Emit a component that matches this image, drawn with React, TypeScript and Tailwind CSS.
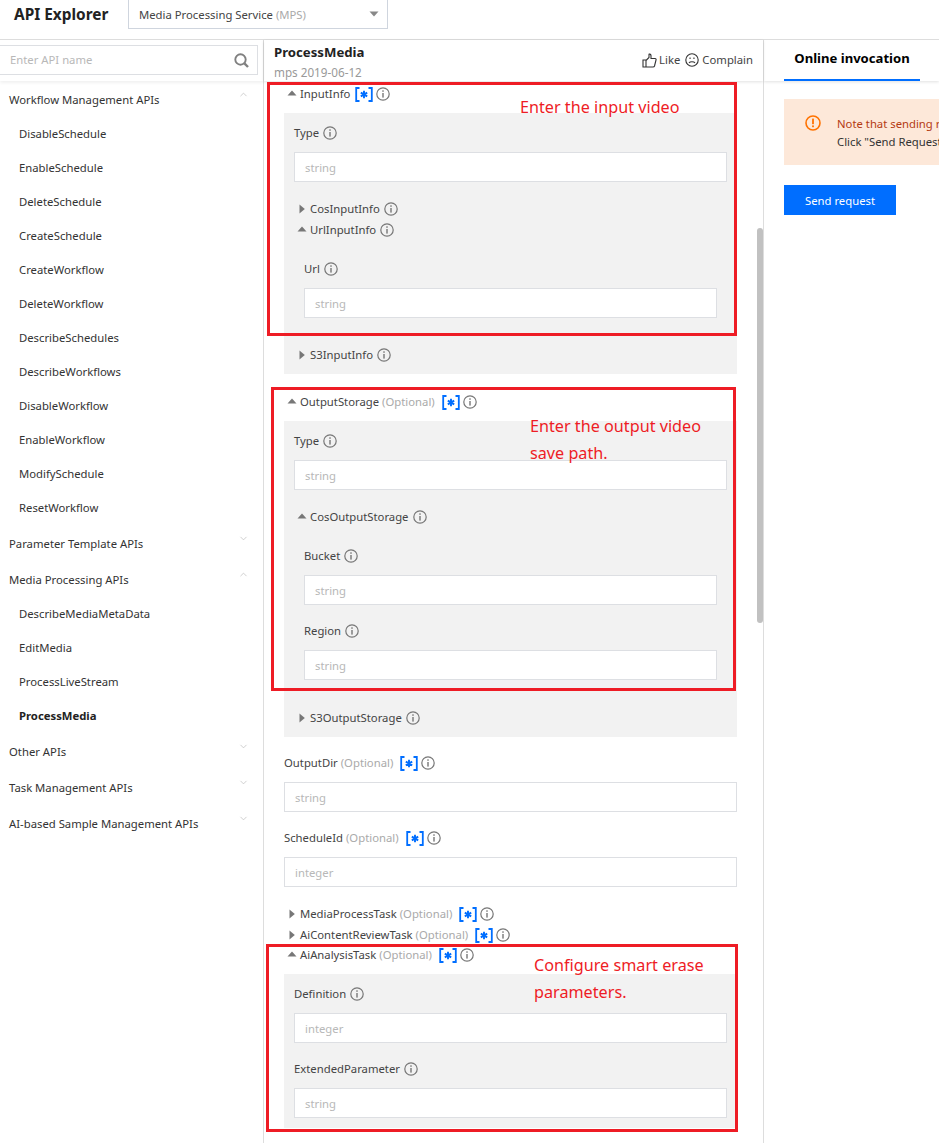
import React from "react";
import { ChevronUp, ChevronDown } from "lucide-react";

const Info = () => (
  <svg width="14" height="14" viewBox="0 0 14 14" fill="none" className="shrink-0">
    <circle cx="7" cy="7" r="6.2" stroke="#777" strokeWidth="1.2" />
    <rect x="6.3" y="6" width="1.4" height="4.6" fill="#777" />
    <rect x="6.3" y="3.3" width="1.4" height="1.5" fill="#777" />
  </svg>
);

const Json = () => (
  <svg width="18" height="15" viewBox="0 0 18 15" fill="none" className="shrink-0">
    <path d="M4.5 1H1.2V14H4.5M13.5 1H16.8V14H13.5" stroke="#006eff" strokeWidth="1.8" />
    <path d="M9 3.8V11.2M5.8 5.6L12.2 9.4M12.2 5.6L5.8 9.4" stroke="#006eff" strokeWidth="1.9" />
  </svg>
);

const Caret = ({ open }: { open: boolean }) =>
  open ? (
    <svg width="10" height="6" viewBox="0 0 10 6" className="shrink-0">
      <path d="M5 0.5L9.5 5.5H0.5Z" fill="#777" />
    </svg>
  ) : (
    <svg width="6" height="10" viewBox="0 0 6 10" className="shrink-0">
      <path d="M0.5 0.5L5.8 5L0.5 9.5Z" fill="#777" />
    </svg>
  );

const Field = ({ ph, cls }: { ph: string; cls: string }) => (
  <div className={`h-[30px] border border-[#dddfe3] bg-white flex items-center px-[10px] pt-[2px] text-[#b8b8b8] ${cls}`}>{ph}</div>
);

const Plain = ({ label, cls, optional }: { label: string; cls: string; optional?: boolean }) => (
  <div className={`h-5 flex items-center text-[#444] ${cls}`}>
    <span>{label}</span>
    {optional && <span className="ml-[3px] text-[#aaa]">(Optional)</span>}
    {optional && <span className="ml-[7px]"><Json /></span>}
    <span className={optional ? "ml-[3px]" : "ml-[4px]"}><Info /></span>
  </div>
);

const Toggle = ({
  label, open, cls, optional, json,
}: { label: string; open: boolean; cls: string; optional?: boolean; json?: boolean }) => (
  <div className={`h-5 flex items-center text-[#444] relative ${cls}`}>
    <span className={open ? "absolute left-[-13px] top-[6px]" : "absolute left-[-11px] top-[5px]"}><Caret open={open} /></span>
    <span>{label}</span>
    {optional && <span className="ml-[3px] text-[#aaa]">(Optional)</span>}
    {json && <span className={optional ? "ml-[7px]" : "ml-[5px]"}><Json /></span>}
    <span className={json ? "ml-[3px]" : "ml-[4px]"}><Info /></span>
  </div>
);

const NavChild = ({ t, bold }: { t: string; bold?: boolean }) => (
  <div className={`h-[34px] flex items-center pl-[19px] ${bold ? "font-bold text-[#222]" : ""}`}>{t}</div>
);

const NavGroup = ({ t, open }: { t: string; open?: boolean }) => (
  <div className="h-9 flex items-center justify-between pl-[9px] pr-[14px] pt-[3px]">
    <span>{t}</span>
    <span className="mb-[12px] text-[#bbb]">
      {open ? <ChevronUp size={11} strokeWidth={1.5} /> : <ChevronDown size={11} strokeWidth={1.5} />}
    </span>
  </div>
);

const Note = ({ t, cls }: { t: string; cls: string }) => (
  <div className={`absolute text-[16.2px] leading-[26px] text-[#ee1c25] ${cls}`}>{t}</div>
);

export default function App() {
  return (
    <div className="w-[939px] h-[1143px] overflow-hidden bg-white relative font-['Noto_Sans','Open_Sans',sans-serif] text-[11.3px] text-[#333]">
      <header className="h-10 flex border-b border-[#dddddd]">
        <div className="w-[128px] pl-[14px] pt-[4px] text-[15.4px] leading-[22px] font-bold text-[#222]">API Explorer</div>
        <div className="w-[260px] h-[29px] border border-t-0 border-[#cfd5de] flex items-center justify-between pl-[10px] pr-[8px]">
          <span className="text-[#444] pt-[2px]">Media Processing Service <span className="text-[#aaa]">(MPS)</span></span>
          <svg width="10" height="6" viewBox="0 0 10 6"><path d="M0.5 0.5H9.5L5 5.5Z" fill="#888" /></svg>
        </div>
      </header>
      <div className="flex h-[1103px]">
        <aside className="w-[264px] shrink-0 border-r border-[#dddddd]">
          <div className="h-[41px] pt-[5px] pr-[5px] shadow-[0_2px_3px_rgba(0,0,0,0.06)]">
            <div className="h-[30px] ml-[-1px] border border-[#dddfe3] flex items-center justify-between pl-[10px] pr-[8px] text-[#b8b8b8]">
              <span>Enter API name</span>
              <svg width="15" height="15" viewBox="0 0 15 15" fill="none" stroke="#808080" strokeWidth="1.9">
                <circle cx="6.5" cy="6.5" r="5.2" />
                <path d="M10.4 10.4L14 14" strokeWidth="2.4" />
              </svg>
            </div>
          </div>
          <div>
            <NavGroup t="Workflow Management APIs" open />
            {["DisableSchedule", "EnableSchedule", "DeleteSchedule", "CreateSchedule", "CreateWorkflow", "DeleteWorkflow", "DescribeSchedules", "DescribeWorkflows", "DisableWorkflow", "EnableWorkflow", "ModifySchedule", "ResetWorkflow"].map((t) => (
              <NavChild key={t} t={t} />
            ))}
            <NavGroup t="Parameter Template APIs" />
            <NavGroup t="Media Processing APIs" open />
            {["DescribeMediaMetaData", "EditMedia", "ProcessLiveStream"].map((t) => (
              <NavChild key={t} t={t} />
            ))}
            <NavChild t="ProcessMedia" bold />
            <NavGroup t="Other APIs" />
            <NavGroup t="Task Management APIs" />
            <NavGroup t="AI-based Sample Management APIs" />
          </div>
        </aside>

        <main className="w-[499px] shrink-0 relative">
          <div className="h-[41px] flex items-start justify-between pl-[10px] pr-[10px] shadow-[0_1px_3px_rgba(0,0,0,0.12)]">
            <div>
              <div className="text-[13.2px] leading-[20px] mt-[2px] font-bold text-[#222]">ProcessMedia</div>
              <div className="text-[11.7px] leading-[16px] mt-[2px] text-[#999]">mps 2019-06-12</div>
            </div>
            <div className="flex items-center mt-[12px] text-[#444]">
              <svg width="15" height="15" viewBox="0 0 15 15" fill="none" stroke="#333" strokeWidth="1.1" className="mr-[2px] ml-[-1px]">
                <path d="M1 7H4V14H1ZM4 7.5L7 4.5V1.5C7 0.8 9 0.6 9 2.5V5.5H13C14 5.5 14.3 6.3 14 7L12.5 13C12.3 13.7 11.8 14 11 14H4" />
              </svg>
              <span>Like</span>
              <svg width="14" height="14" viewBox="0 0 14 14" fill="none" stroke="#333" strokeWidth="1.1" className="ml-[5px] mr-[3px]">
                <circle cx="7" cy="7" r="6.2" />
                <path d="M4 10C5 8.4 9 8.4 10 10" />
                <path d="M4.5 5.2H5.6M8.4 5.2H9.5" strokeWidth="1.4" />
              </svg>
              <span>Complain</span>
            </div>
          </div>

          <div className="flex">
            <div className="w-[473px] pl-[20px]">
              <Toggle label="InputInfo" open json cls="ml-[16px] mt-[3px]" />
              <div className="mt-[9px] w-[453px] bg-[#f2f2f2] px-[10px] pt-[10px] pb-[9px]">
                <Plain label="Type" cls="" />
                <Field ph="string" cls="mt-[9px]" />
                <Toggle label="CosInputInfo" open={false} cls="ml-[16px] mt-[17px]" />
                <Toggle label="UrlInputInfo" open cls="ml-[16px] mt-[1px]" />
                <div className="pl-[10px] pr-[10px]">
                  <Plain label="Url" cls="mt-[19px]" />
                  <Field ph="string" cls="mt-[9px]" />
                </div>
                <Toggle label="S3InputInfo" open={false} cls="ml-[16px] mt-[27px]" />
              </div>

              <Toggle label="OutputStorage" open optional json cls="ml-[16px] mt-[18px]" />
              <div className="mt-[9px] w-[453px] bg-[#f2f2f2] px-[10px] pt-[10px] pb-[9px]">
                <Plain label="Type" cls="" />
                <Field ph="string" cls="mt-[9px]" />
                <Toggle label="CosOutputStorage" open cls="ml-[16px] mt-[17px]" />
                <div className="pl-[10px] pr-[10px]">
                  <Plain label="Bucket" cls="mt-[19px]" />
                  <Field ph="string" cls="mt-[9px]" />
                  <Plain label="Region" cls="mt-[16px]" />
                  <Field ph="string" cls="mt-[9px]" />
                </div>
                <Toggle label="S3OutputStorage" open={false} cls="ml-[16px] mt-[28px]" />
              </div>

              <div className="w-[453px]">
                <Plain label="OutputDir" optional cls="mt-[16px]" />
                <Field ph="string" cls="mt-[9px]" />
                <Plain label="ScheduleId" optional cls="mt-[16px]" />
                <Field ph="integer" cls="mt-[9px]" />
              </div>

              <Toggle label="MediaProcessTask" open={false} optional json cls="ml-[16px] mt-[17px]" />
              <Toggle label="AiContentReviewTask" open={false} optional json cls="ml-[16px] mt-[1px]" />
              <Toggle label="AiAnalysisTask" open optional json cls="ml-[16px]" />
              <div className="mt-[9px] w-[453px] bg-[#f2f2f2] px-[10px] pt-[10px] pb-[10px]">
                <Plain label="Definition" cls="" />
                <Field ph="integer" cls="mt-[9px]" />
                <Plain label="ExtendedParameter" cls="mt-[16px]" />
                <Field ph="string" cls="mt-[9px]" />
              </div>
            </div>
            <div className="w-[6px] h-[395px] mt-[147px] ml-[20px] rounded-[3px] bg-[#c1c1c1]" />
          </div>

          <div className="absolute left-[3px] top-[42px] w-[470px] h-[254px] border-[3px] border-[#ee1c25]" />
          <div className="absolute left-[7px] top-[347px] w-[465px] h-[304px] border-[3px] border-[#ee1c25]" />
          <div className="absolute left-[2px] top-[904px] w-[472px] h-[188px] border-[3px] border-[#ee1c25]" />
          <Note t="Enter the input video" cls="left-[256px] top-[54px]" />
          <Note t="Enter the output video" cls="left-[266px] top-[373px]" />
          <Note t="save path." cls="left-[266px] top-[400px]" />
          <Note t="Configure smart erase" cls="left-[270px] top-[912px]" />
          <Note t="parameters." cls="left-[270px] top-[939px]" />
        </main>

        <section className="flex-1 border-l border-[#dddddd] min-w-0 overflow-hidden">
          <div className="h-[41px] shadow-[0_1px_3px_rgba(0,0,0,0.12)] pl-[20px]">
            <div className="w-[136px] h-[41px] border-b-[2px] border-[#006eff] text-center text-[13.1px] leading-[20px] pt-[8px] font-bold text-black">Online invocation</div>
          </div>
          <div className="pl-[20px]">
            <div className="mt-[18px] w-[300px] h-[66px] bg-[#fde8d9] flex pl-[21px] pt-[16px]">
              <svg width="16" height="16" viewBox="0 0 16 16" fill="none" className="shrink-0">
                <circle cx="8" cy="8" r="7" stroke="#ff7200" strokeWidth="1.6" />
                <rect x="7.1" y="3.6" width="1.8" height="5.6" fill="#ff7200" />
                <rect x="7.1" y="10.4" width="1.8" height="1.8" fill="#ff7200" />
              </svg>
              <div className="ml-[16px] leading-[18px] whitespace-nowrap">
                <div className="text-[#b43b12]">Note that sending requests</div>
                <div className="text-[#333]">Click "Send Request"</div>
              </div>
            </div>
            <div className="mt-[20px] w-[112px] h-[30px] bg-[#006eff] text-white flex items-center justify-center pt-[2px]">Send request</div>
          </div>
        </section>
      </div>
    </div>
  );
}
